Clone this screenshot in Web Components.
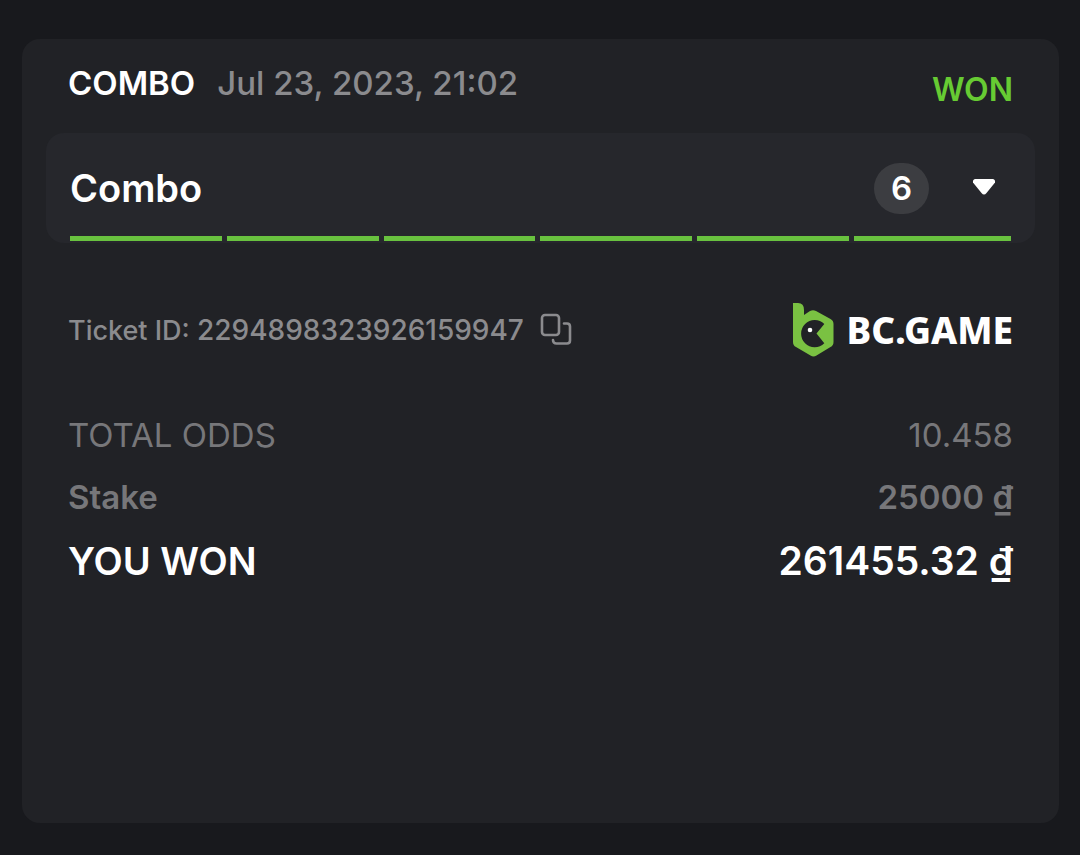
<!DOCTYPE html>
<html lang="en">
<head>
<meta charset="utf-8">
<meta name="viewport" content="width=device-width, initial-scale=1">
<title>Bet ticket</title>
<style>
  body { margin: 0; background: #18191d; color: #fff; font-family: Inter, "Noto Sans", sans-serif; }
</style>
</head>
<body>
<bet-ticket>
  <ticket-header slot="header" kind="COMBO" date="Jul 23, 2023, 21:02" status="WON"></ticket-header>
  <combo-panel slot="panel" count="6">Combo</combo-panel>
  <ticket-meta slot="meta" ticket="2294898323926159947"><brand-logo></brand-logo></ticket-meta>
  <summary-row label="TOTAL ODDS" variant="light">10.458</summary-row>
  <summary-row label="Stake" variant="medium">25000 ₫</summary-row>
  <summary-row label="YOU WON" variant="strong">261455.32 ₫</summary-row>
</bet-ticket>

<script>
class BaseElement extends HTMLElement {
  connectedCallback() {
    if (this.shadowRoot) return;
    const template = document.createElement('template');
    template.innerHTML = this.render();
    this.attachShadow({ mode: 'open' }).append(template.content.cloneNode(true));
  }
}

customElements.define('bet-ticket', class extends BaseElement {
  render() {
    return `
      <style>
        :host { display: flex; box-sizing: border-box; min-height: 100vh; padding: 39px 21px 32px 22px; }
        article { flex: 1; min-width: 0; padding: 24px; border-radius: 18px; background: #212226; }
        .rows { display: grid; gap: 16px; margin: 54px 22px 0; }
      </style>
      <article>
        <slot name="header"></slot>
        <slot name="panel"></slot>
        <slot name="meta"></slot>
        <div class="rows"><slot></slot></div>
      </article>`;
  }
});

customElements.define('ticket-header', class extends BaseElement {
  render() {
    return `
      <style>
        :host { display: block; padding: 0 22px; }
        header { display: flex; justify-content: space-between; font-size: 33px; line-height: 40px; }
        .left { display: flex; gap: 22px; }
        h1 { margin: 0; font: inherit; font-weight: 600; }
        time { color: #8b8b8e; font-weight: 500; }
        .status { padding-top: 7px; color: #67cb33; font-size: 32px; font-weight: 600; }
      </style>
      <header>
        <div class="left"><h1>${this.getAttribute('kind')}</h1><time datetime="2023-07-23T21:02">${this.getAttribute('date')}</time></div>
        <span class="status">${this.getAttribute('status')}</span>
      </header>`;
  }
});

customElements.define('combo-panel', class extends BaseElement {
  render() {
    const count = Number(this.getAttribute('count'));
    return `
      <style>
        :host { display: block; margin-top: 23px; }
        section { padding: 7px 24px 2px; border-radius: 18px; background: #26272c; }
        .top { display: flex; align-items: center; height: 96px; }
        h2 { flex: 1; margin: 0; font-size: 38px; line-height: 46px; font-weight: 600; }
        .count { box-sizing: border-box; width: 55px; height: 51px; border-radius: 26px; background: #3c3d41; font-size: 33px; line-height: 51px; font-weight: 600; text-align: center; }
        button { display: grid; place-items: center; width: 54px; height: 48px; margin: 0 0 0 28px; padding: 0; border: 0; background: none; color: inherit; cursor: pointer; }
        .bars { display: grid; grid-template-columns: repeat(${count}, 1fr); }
        .bars i { height: 5px; margin-right: 5px; background: #69c23f; }
        .bars i:last-child { margin-right: 0; }
        svg { display: block; }
      </style>
      <section>
        <div class="top">
          <h2><slot></slot></h2>
          <span class="count">${count}</span>
          <button type="button" aria-label="Show selections">
            <svg width="24" height="18" viewBox="0 0 24 18" aria-hidden="true"><path d="M3 0H21Q23.500 .500 23 3.500L14.500 14Q12 17 9.500 14L1 3.500Q.500 .500 3 0Z" fill="currentColor"/></svg>
          </button>
        </div>
        <div class="bars">${'<i></i>'.repeat(count)}</div>
      </section>`;
  }
});

customElements.define('ticket-meta', class extends BaseElement {
  render() {
    return `
      <style>
        :host { display: flex; align-items: center; justify-content: space-between; margin: 59px 22px 0; color: #8b8b8e; }
        .id { display: flex; align-items: center; gap: 15px; font-size: 27px; line-height: 36px; font-weight: 500; }
        .number { font-size: 28px; }
        button { display: block; margin: 0; padding: 0; border: 0; background: none; color: inherit; cursor: pointer; }
        svg { display: block; }
      </style>
      <div class="id">
        <span>Ticket ID: <span class="number">${this.getAttribute('ticket')}</span></span>
        <button type="button" aria-label="Copy ticket ID">
          <svg width="34" height="34" viewBox="0 0 34 34" fill="none" stroke="currentColor" stroke-width="2.600" stroke-linecap="round" aria-hidden="true">
            <rect x="3" y="2" width="17" height="20" rx="3"/>
            <path d="M25 10.500H28Q31 10.500 31 13.500V27.500Q31 30.500 28 30.500H17.500Q14 30.500 14 27"/>
          </svg>
        </button>
      </div>
      <slot></slot>`;
  }
});

customElements.define('brand-logo', class extends BaseElement {
  render() {
    return `
      <style>
        :host { display: flex; align-items: center; gap: 13px; color: #fff; font: 800 37px/56px "Noto Sans", "Open Sans", sans-serif; }
        svg { display: block; }
      </style>
      <svg width="42" height="56" viewBox="0 0 42 56" aria-hidden="true">
        <path d="M1 1H6Q12 1 12 8V13L18 9Q21 7.500 24 9L38.500 17Q41.500 18.700 41.500 22V40Q41.500 43.500 38.500 45L24.500 53.500Q21.500 55.500 18.500 53.500L4 45Q1 43.500 1 40Z" fill="#7ac142"/>
        <path d="M32.300 22A13.600 13.600 0 1 0 32.300 41.300L24.500 31.600Z" fill="#212226"/>
        <circle cx="18" cy="28" r="2.300" fill="#fff"/>
      </svg>
      <span>BC.GAME</span>`;
  }
});

customElements.define('summary-row', class extends BaseElement {
  render() {
    return `
      <style>
        :host { display: block; font-size: 33px; line-height: 46px; color: #77777a; }
        :host([variant="medium"]) { font-weight: 600; }
        :host([variant="strong"]) { font-size: 39px; line-height: 50px; font-weight: 600; color: #fff; }
        :host([variant="strong"]) dt { font-size: 38px; }
        dl { display: flex; justify-content: space-between; margin: 0; }
        dd { margin: 0; }
      </style>
      <dl><dt>${this.getAttribute('label')}</dt><dd><slot></slot></dd></dl>`;
  }
});
</script>
</body>
</html>
